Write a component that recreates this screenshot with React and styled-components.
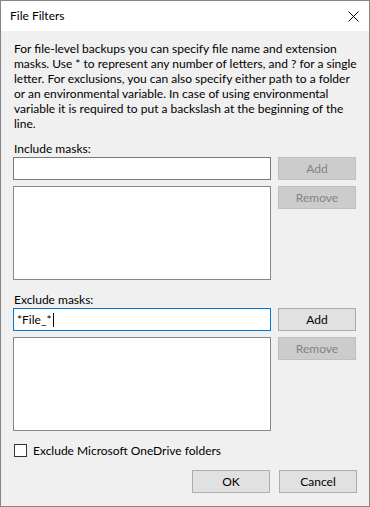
import React from "react";
import styled, { createGlobalStyle } from "styled-components";

const GlobalStyle = createGlobalStyle`
  html, body {
    margin: 0;
    padding: 0;
    background: #ffffff;
  }
  * {
    box-sizing: border-box;
  }
`;

const Window = styled.div`
  width: 370px;
  height: 507px;
  border: 1px solid #858585;
  background: #f0f0f0;
  display: flex;
  flex-direction: column;
  font-family: "Segoe UI", Lato, "Liberation Sans", sans-serif;
  font-size: 12px;
  color: #000;
`;

const TitleBar = styled.div`
  height: 30px;
  flex: none;
  background: #ffffff;
  display: flex;
  align-items: center;
  justify-content: space-between;
  padding: 0 10px 0 9px;
`;

const TitleText = styled.span`
  font-size: 12px;
  line-height: 16px;
`;

const CloseButton = styled.button`
  width: 12px;
  height: 12px;
  padding: 0;
  border: 0;
  background: transparent;
  display: flex;
  align-items: center;
  justify-content: center;
`;

const Body = styled.div`
  flex: 1;
  display: flex;
  flex-direction: column;
  padding: 10px 12px 0 12px;
`;

const Intro = styled.p`
  margin: 0 0 10px 0;
  line-height: 15px;
  padding-left: 1px;
`;

const Label = styled.div`
  line-height: 15px;
  padding-left: 1px;
  margin-bottom: 1px;
`;

const MaskGrid = styled.div`
  display: grid;
  grid-template-columns: 258px 78px;
  grid-template-rows: 23px 94px;
  column-gap: 7px;
  row-gap: 6px;
  margin-bottom: ${(p) => p.$after}px;
`;

const TextInput = styled.div`
  background: #ffffff;
  border: 1px solid ${(p) => (p.$focused ? "#0078d7" : "#7a7a7a")};
  padding: 0 3px;
  display: flex;
  align-items: center;
  line-height: 15px;
`;

const Caret = styled.span`
  display: inline-block;
  width: 1px;
  height: 14px;
  background: #000;
  margin-left: 1px;
`;

const ListBox = styled.div`
  background: #ffffff;
  border: 1px solid #828790;
`;

const Button = styled.button`
  font: inherit;
  height: 23px;
  padding: 0;
  border: 1px solid ${(p) => (p.disabled ? "#bfbfbf" : "#adadad")};
  background: ${(p) => (p.disabled ? "#cccccc" : "#e1e1e1")};
  color: ${(p) => (p.disabled ? "#838383" : "#000000")};
  line-height: 15px;
  align-self: start;
`;

const CheckRow = styled.label`
  display: flex;
  align-items: center;
  gap: 6px;
  height: 14px;
  margin-top: 12px;
  padding-left: 1px;
  line-height: 15px;
`;

const CheckBox = styled.span`
  width: 13px;
  height: 13px;
  border: 1px solid #333333;
  background: #ffffff;
  flex: none;
`;

const Footer = styled.div`
  display: flex;
  justify-content: flex-end;
  gap: 9px;
  margin-top: 13px;
`;

const FooterButton = styled(Button)`
  width: 78px;
`;

const MaskGroup = ({ label, value, focused, after }) => (
  <>
    <Label>{label}</Label>
    <MaskGrid $after={after}>
      <TextInput $focused={focused}>
        {value}
        {focused && <Caret />}
      </TextInput>
      <Button disabled={!value}>Add</Button>
      <ListBox />
      <Button disabled>Remove</Button>
    </MaskGrid>
  </>
);

export default function App() {
  return (
    <>
      <GlobalStyle />
      <Window>
        <TitleBar>
          <TitleText>File Filters</TitleText>
          <CloseButton aria-label="Close">
            <svg width="11" height="11" viewBox="0 0 11 11">
              <path d="M0.5 0.5 L10.5 10.5 M10.5 0.5 L0.5 10.5" stroke="#000" strokeWidth="1" />
            </svg>
          </CloseButton>
        </TitleBar>
        <Body>
          <Intro>
            For file-level backups you can specify file name and extension
            <br />
            masks. Use * to represent any number of letters, and ? for a single
            <br />
            letter. For exclusions, you can also specify either path to a folder
            <br />
            or an environmental variable. In case of using environmental
            <br />
            variable it is required to put a backslash at the beginning of the
            <br />
            line.
          </Intro>
          <MaskGroup label="Include masks:" after={12} />
          <MaskGroup label="Exclude masks:" value="*File_*" focused after={0} />
          <CheckRow>
            <CheckBox />
            Exclude Microsoft OneDrive folders
          </CheckRow>
          <Footer>
            <FooterButton>OK</FooterButton>
            <FooterButton>Cancel</FooterButton>
          </Footer>
        </Body>
      </Window>
    </>
  );
}
